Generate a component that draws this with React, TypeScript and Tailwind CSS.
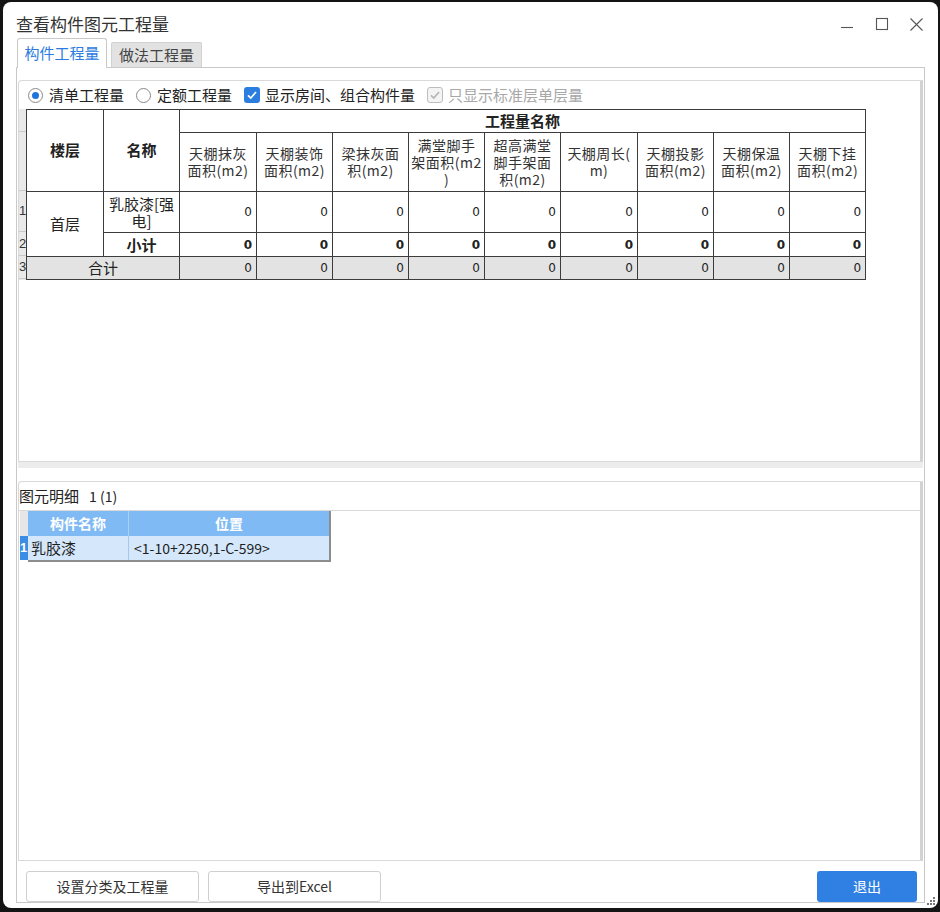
import React from 'react';

const colHeaders: string[][] = [
  ['天棚抹灰', '面积(m2)'],
  ['天棚装饰', '面积(m2)'],
  ['梁抹灰面', '积(m2)'],
  ['满堂脚手', '架面积(m2', ')'],
  ['超高满堂', '脚手架面', '积(m2)'],
  ['天棚周长(', 'm)'],
  ['天棚投影', '面积(m2)'],
  ['天棚保温', '面积(m2)'],
  ['天棚下挂', '面积(m2)'],
];

const colWidths = [77, 76, 77, 76, 76, 76, 76, 77, 76, 76, 76];

const cell = 'border border-[#3c3c3c] p-0';

function Zeros({ bold }: { bold?: boolean }) {
  return (
    <>
      {colHeaders.map((_, i) => (
        <td
          key={i}
          className={`${cell} pr-[4px] text-right align-middle font-['DejaVu_Sans',sans-serif] text-[12px] text-[#222] ${
            bold ? 'font-bold' : ''
          }`}
        >
          0
        </td>
      ))}
    </>
  );
}

function WindowControls() {
  return (
    <div className="ml-auto flex h-full items-center pr-[4px]">
      <div className="flex h-[24px] w-[35px] items-center justify-center">
        <svg width="14" height="14" viewBox="0 0 14 14">
          <line x1="1" y1="10.5" x2="13" y2="10.5" stroke="#555" strokeWidth="1.1" />
        </svg>
      </div>
      <div className="flex h-[24px] w-[35px] items-center justify-center">
        <svg width="14" height="14" viewBox="0 0 14 14">
          <rect x="1.5" y="1.5" width="11" height="11" fill="none" stroke="#555" strokeWidth="1.1" />
        </svg>
      </div>
      <div className="flex h-[24px] w-[35px] items-center justify-center">
        <svg width="15" height="15" viewBox="0 0 15 15">
          <path d="M1.5 1.5 L13.5 13.5 M13.5 1.5 L1.5 13.5" stroke="#555" strokeWidth="1.1" fill="none" />
        </svg>
      </div>
    </div>
  );
}

function Radio({ checked, label }: { checked?: boolean; label: string }) {
  return (
    <label className="flex items-center gap-[6px]">
      <span className="flex h-[15px] w-[15px] items-center justify-center rounded-full border border-[#8a8a8a] bg-white">
        {checked && <span className="h-[7px] w-[7px] rounded-full bg-[#1f74d9]" />}
      </span>
      <span className="text-[15px] leading-[20px] text-[#222]">{label}</span>
    </label>
  );
}

function Check({ disabled, label }: { disabled?: boolean; label: string }) {
  return (
    <label className="flex items-center gap-[5px]">
      <span
        className={`flex h-[16px] w-[16px] items-center justify-center rounded-[3px] ${
          disabled ? 'border border-[#bdbdbd] bg-[#f4f4f4]' : 'bg-[#2b7de0]'
        }`}
      >
        <svg width="12" height="12" viewBox="0 0 12 12">
          <path
            d="M2 6.3 L4.8 9 L10 3"
            fill="none"
            stroke={disabled ? '#b5b5b5' : '#fff'}
            strokeWidth="1.7"
          />
        </svg>
      </span>
      <span className={`text-[15px] leading-[20px] ${disabled ? 'text-[#a8a8a8]' : 'text-[#222]'}`}>
        {label}
      </span>
    </label>
  );
}

function QuantityTable() {
  return (
    <div className="flex">
      <div className="flex w-[7px] flex-col bg-[#e9e9e9] font-['Liberation_Sans',sans-serif] text-[13px] text-[#333]">
        <div className="h-[23px] border-b border-[#c9c9c9]" />
        <div className="h-[59px] border-b border-[#c9c9c9]" />
        <div className="flex h-[41px] items-center border-b border-[#c9c9c9]">1</div>
        <div className="flex h-[24px] items-center border-b border-[#c9c9c9]">2</div>
        <div className="flex h-[23px] items-center border-b border-[#c9c9c9]">3</div>
      </div>
      <table className="w-[839px] table-fixed border-collapse font-['Noto_Sans_CJK_SC',sans-serif] text-[#222]">
        <colgroup>
          {colWidths.map((w, i) => (
            <col key={i} style={{ width: w }} />
          ))}
        </colgroup>
        <tbody>
          <tr className="h-[23px]">
            <td rowSpan={2} className={`${cell} text-center text-[15px] font-bold`}>
              楼层
            </td>
            <td rowSpan={2} className={`${cell} text-center text-[15px] font-bold`}>
              名称
            </td>
            <td colSpan={9} className={`${cell} text-center text-[15px] font-bold leading-[20px]`}>
              工程量名称
            </td>
          </tr>
          <tr className="h-[59px]">
            {colHeaders.map((lines, i) => (
              <td key={i} className={`${cell} text-center text-[14px] leading-[17px] tracking-[0.5px] text-[#333]`}>
                {lines.map((l, j) => (
                  <div key={j} className="whitespace-nowrap">
                    {l}
                  </div>
                ))}
              </td>
            ))}
          </tr>
          <tr className="h-[41px]">
            <td rowSpan={2} className={`${cell} text-center text-[15px]`}>
              首层
            </td>
            <td className={`${cell} text-center text-[15px] leading-[17px]`}>
              <div>乳胶漆[强</div>
              <div>电]</div>
            </td>
            <Zeros />
          </tr>
          <tr className="h-[24px]">
            <td className={`${cell} text-center text-[15px] font-bold leading-[20px]`}>小计</td>
            <Zeros bold />
          </tr>
          <tr className="h-[23px] bg-[#e3e3e3]">
            <td colSpan={2} className={`${cell} text-center text-[15px] leading-[20px]`}>
              合计
            </td>
            <Zeros />
          </tr>
        </tbody>
      </table>
    </div>
  );
}

function DetailGrid() {
  return (
    <div className="ml-[1px] flex">
      <div className="flex w-[8px] flex-col">
        <div className="h-[25px] bg-[#e6e6e6]" />
        <div className="flex h-[24px] items-center bg-[#3a8ce4] font-['Liberation_Sans',sans-serif] text-[13px] font-bold text-white">
          1
        </div>
      </div>
      <div className="flex flex-col border-r-2 border-b-2 border-[#8d8d8d]">
        <div className="flex h-[25px] bg-[#7fbaf5] text-[14px] font-bold text-white">
          <div className="flex w-[101px] items-center justify-center border-r border-[#a9cff6]">构件名称</div>
          <div className="flex w-[200px] items-center justify-center">位置</div>
        </div>
        <div className="flex h-[24px] bg-[#d5e8fb] text-[#1e1e1e]">
          <div className="flex w-[101px] items-center border-r border-[#a7c7ea] pl-[3px] text-[15px]">乳胶漆</div>
          <div className="flex w-[200px] items-center pl-[5px] text-[14px]">&lt;1-10+2250,1-C-599&gt;</div>
        </div>
      </div>
    </div>
  );
}

export default function App() {
  return (
    <div className="h-[912px] w-[940px] overflow-hidden bg-[#141414] pl-[3px] pt-[2px] font-['Noto_Sans_CJK_SC',sans-serif]">
      <div className="relative flex h-[906px] w-[935px] flex-col rounded-[8px] bg-white">
        {/* title bar */}
        <div className="flex h-[36px] items-center pl-[13px] pt-[8px]">
          <span className="text-[17px] leading-[22px] text-[#333]">查看构件图元工程量</span>
          <WindowControls />
        </div>

        {/* tabs */}
        <div className="ml-[13px] flex h-[29px] items-end pl-[1px]">
          <div className="relative z-10 -mb-px flex h-[30px] w-[90px] items-center justify-center rounded-t-[3px] border border-b-0 border-[#c9c9c9] bg-white text-[15px] text-[#2b7be0]">
            构件工程量
          </div>
          <div className="ml-[4px] flex h-[25px] w-[91px] items-center justify-center rounded-t-[2px] border border-b-0 border-[#d2d2d2] bg-[#e2e2e2] text-[15px] text-[#444]">
            做法工程量
          </div>
        </div>

        {/* tab panel */}
        <div className="ml-[13px] flex h-[836px] w-[909px] flex-col border border-[#c9c9c9] px-px pt-[12px]">
          <div className="flex h-[382px] flex-col rounded-tl-[4px] border border-r-[3px] border-[#d9d9d9] border-r-[#d2d2d2]">
            <div className="flex h-[28px] items-center gap-[12px] pl-[9px]">
              <Radio checked label="清单工程量" />
              <Radio label="定额工程量" />
              <Check label="显示房间、组合构件量" />
              <Check disabled label="只显示标准层单层量" />
            </div>
            <QuantityTable />
          </div>

          <div className="h-[6px] bg-[#ececec]" />
          <div className="h-[13px]" />

          <div className="flex h-[380px] flex-col rounded-tl-[4px] border border-r-[3px] border-[#d9d9d9] border-r-[#d2d2d2]">
            <div className="flex h-[29px] items-center border-b border-[#d9d9d9] text-[15px] text-[#222]">
              <span>图元明细</span>
              <span className="ml-[10px] text-[14px]">1 (1)</span>
            </div>
            <DetailGrid />
          </div>

          <div className="mt-[10px] flex items-center pl-[8px] pr-[6px]">
            <button
              type="button"
              className="h-[31px] w-[173px] rounded-[3px] border border-[#cfcfcf] bg-white text-[14px] text-[#333]"
            >
              设置分类及工程量
            </button>
            <button
              type="button"
              className="ml-[9px] h-[31px] w-[173px] rounded-[3px] border border-[#cfcfcf] bg-white text-[14px] text-[#333]"
            >
              导出到Excel
            </button>
            <button
              type="button"
              className="ml-auto h-[31px] w-[100px] rounded-[3px] bg-[#2f80e2] text-[14px] text-white"
            >
              退出
            </button>
          </div>
        </div>

        {/* resize grip */}
        <div className="absolute bottom-[3px] right-[3px] grid grid-cols-3 gap-[1px]">
          <span />
          <span />
          <span className="h-[2px] w-[2px] bg-[#777]" />
          <span />
          <span className="h-[2px] w-[2px] bg-[#777]" />
          <span className="h-[2px] w-[2px] bg-[#777]" />
          <span className="h-[2px] w-[2px] bg-[#777]" />
          <span className="h-[2px] w-[2px] bg-[#777]" />
          <span className="h-[2px] w-[2px] bg-[#777]" />
        </div>
      </div>
    </div>
  );
}
